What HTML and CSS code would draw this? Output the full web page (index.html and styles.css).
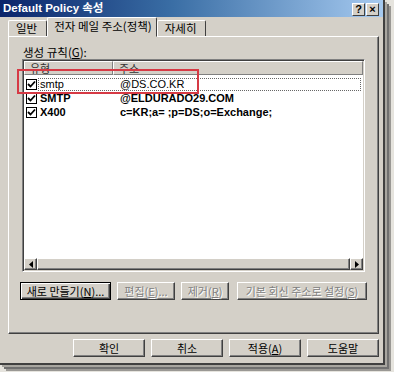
FILE: index.html
```html
<!DOCTYPE html>
<html>
<head>
<meta charset="utf-8">
<link rel="stylesheet" href="styles.css">
</head>
<body>
<div class="window">
  <div class="titlebar">
    <span class="title">Default Policy 속성</span>
    <div class="tbtns">
      <span class="tbtn">?</span>
      <span class="tbtn">×</span>
    </div>
  </div>
  <div class="body">
    <div class="tabs">
      <div class="tab">일반</div>
      <div class="tab active">전자 메일 주소(정책)</div>
      <div class="tab">자세히</div>
    </div>
    <div class="panel">
      <div class="label">생성 규칙(<u>G</u>):</div>
      <div class="list">
        <div class="header">
          <div class="col c1">유형</div>
          <div class="col c2">주소</div>
        </div>
        <div class="rows">
          <div class="row">
            <span class="cb"><svg width="9" height="9" viewBox="0 0 9 9"><path d="M1 4 L3.5 6.5 L8 1.5" fill="none" stroke="#000" stroke-width="1.8"/></svg></span>
            <span class="cell focus"><span class="t1">smtp</span><span class="t2">@DS.CO.KR</span></span>
          </div>
          <div class="row bold">
            <span class="cb"><svg width="9" height="9" viewBox="0 0 9 9"><path d="M1 4 L3.5 6.5 L8 1.5" fill="none" stroke="#000" stroke-width="1.8"/></svg></span>
            <span class="cell"><span class="t1">SMTP</span><span class="t2">@ELDURADO29.COM</span></span>
          </div>
          <div class="row bold">
            <span class="cb"><svg width="9" height="9" viewBox="0 0 9 9"><path d="M1 4 L3.5 6.5 L8 1.5" fill="none" stroke="#000" stroke-width="1.8"/></svg></span>
            <span class="cell"><span class="t1">X400</span><span class="t2">c=KR;a= ;p=DS;o=Exchange;</span></span>
          </div>
        </div>
        <div class="hscroll">
          <div class="sbtn"><svg width="4" height="7" viewBox="0 0 4 7"><path d="M4 0 L0 3.5 L4 7 Z" fill="#000"/></svg></div>
          <div class="thumb"></div>
          <div class="sbtn"><svg width="4" height="7" viewBox="0 0 4 7"><path d="M0 0 L4 3.5 L0 7 Z" fill="#000"/></svg></div>
        </div>
      </div>
      <div class="btnrow">
        <div class="btn default w-new">새로 만들기(<u>N</u>)...</div>
        <div class="btn disabled w-edit">편집(<u>E</u>)...</div>
        <div class="btn disabled w-del">제거(<u>R</u>)</div>
        <div class="btn disabled w-set">기본 회신 주소로 설정(<u>S</u>)</div>
      </div>
    </div>
    <div class="footer">
      <div class="btn fbtn">확인</div>
      <div class="btn fbtn">취소</div>
      <div class="btn fbtn">적용(<u>A</u>)</div>
      <div class="btn fbtn">도움말</div>
    </div>
  </div>
</div>
<div class="highlight"></div>
</body>
</html>
```

FILE: styles.css
```css
html, body {
  margin: 0;
  padding: 0;
}
body {
  width: 394px;
  height: 372px;
  background: #e6e4de;
  position: relative;
  overflow: hidden;
  font-family: "Noto Sans CJK KR", "Liberation Sans", sans-serif;
  font-size: 11px;
  color: #000;
}
.window {
  width: 383px;
  height: 363px;
  background: #d4d0c8;
  border-right: 2px solid #404040;
  border-bottom: 2px solid #404040;
  box-shadow: 2px 2px 0 #a8a6a0, 4px 4px 0 #707070, 6px 6px 0 #9a9894;
  display: flex;
  flex-direction: column;
}
.titlebar {
  height: 17px;
  background: linear-gradient(to right, #0a246a 0%, #3a6ea5 45%, #a6caf0 100%);
  display: flex;
  align-items: center;
  justify-content: space-between;
  padding: 0 4px 0 3px;
}
.title {
  color: #fff;
  font-family: "Liberation Sans", "Noto Sans CJK KR", sans-serif;
  font-weight: bold;
  font-size: 11.5px;
  line-height: 17px;
}
.tbtns {
  display: flex;
  gap: 1px;
  padding-top: 1px;
}
.tbtn {
  width: 11px;
  height: 11px;
  background: #d4d0c8;
  border-top: 1px solid #fff;
  border-left: 1px solid #fff;
  border-right: 1px solid #404040;
  border-bottom: 1px solid #404040;
  font-family: "Liberation Sans", sans-serif;
  font-weight: bold;
  font-size: 11px;
  line-height: 11px;
  text-align: center;
  color: #000;
}
.body {
  padding: 1px 0 0 8px;
  display: flex;
  flex-direction: column;
}
.tabs {
  display: flex;
  height: 18px;
  align-items: flex-end;
  position: relative;
  z-index: 2;
}
.tab {
  height: 16px;
  line-height: 15px;
  padding: 0 8px 0 7px;
  border-top: 1px solid #fff;
  border-left: 1px solid #fff;
  border-right: 1px solid #404040;
  border-radius: 2px 2px 0 0;
  font-size: 11.5px;
  box-sizing: border-box;
}
.tab:first-child {
  padding: 0 9px 0 7px;
}
.tab.active {
  height: 20px;
  margin-bottom: -1px;
  padding: 0 4px 0 6px;
  background: #d4d0c8;
  line-height: 17px;
  border-bottom: 1px solid #d4d0c8;
}
.panel {
  width: 371px;
  height: 298px;
  box-sizing: border-box;
  border-top: 1px solid #fff;
  border-left: 1px solid #fff;
  border-right: 1px solid #404040;
  border-bottom: 1px solid #404040;
  box-shadow: inset -1px -1px 0 #808080;
  padding: 9px 0 0 13px;
  display: flex;
  flex-direction: column;
}
.label {
  height: 13px;
  line-height: 12px;
  font-size: 11.5px;
  padding-left: 1px;
}
.list {
  width: 343px;
  height: 213px;
  box-sizing: border-box;
  background: #fff;
  border-top: 1px solid #808080;
  border-left: 1px solid #808080;
  border-right: 1px solid #fff;
  border-bottom: 1px solid #fff;
  box-shadow: inset 1px 1px 0 #404040, inset -1px -1px 0 #d4d0c8;
  padding: 1px;
  display: flex;
  flex-direction: column;
}
.header {
  height: 14px;
  display: flex;
  background: #d4d0c8;
  flex-shrink: 0;
}
.col {
  box-sizing: border-box;
  border-top: 1px solid #fff;
  border-left: 1px solid #fff;
  border-right: 1px solid #808080;
  border-bottom: 1px solid #808080;
  padding-left: 5px;
  font-size: 11px;
  line-height: 12px;
  color: #333;
}
.c1 { width: 89px; }
.c2 { flex: 1; }
.rows {
  flex: 1;
  padding-top: 2px;
  font-family: "Liberation Sans", sans-serif;
  font-size: 11px;
}
.row {
  height: 14px;
  display: flex;
  align-items: center;
  padding-left: 2px;
}
.row.bold { font-weight: bold; }
.cb {
  width: 9px;
  height: 9px;
  border: 1px solid #000;
  box-sizing: content-box;
  background: #fff;
  display: flex;
  align-items: center;
  justify-content: center;
  flex-shrink: 0;
}
.cell {
  flex: 1;
  height: 13px;
  display: flex;
  align-items: center;
  margin-left: 1px;
  margin-right: 2px;
  border: 1px dotted transparent;
  box-sizing: border-box;
}
.cell.focus {
  border: 1px dotted #666;
}
.t1 {
  width: 80px;
  padding-left: 1px;
}
.t2 {
  flex: 1;
}
.hscroll {
  height: 12px;
  display: flex;
  flex-shrink: 0;
  background: #d4d0c8;
}
.sbtn, .thumb {
  box-sizing: border-box;
  height: 12px;
  background: #d4d0c8;
  border-top: 1px solid #fff;
  border-left: 1px solid #fff;
  border-right: 1px solid #404040;
  border-bottom: 1px solid #404040;
  box-shadow: inset -1px -1px 0 #808080;
  display: flex;
  align-items: center;
  justify-content: center;
}
.sbtn { width: 13px; }
.thumb { flex: 1; }
.btnrow {
  margin-top: 10px;
  display: flex;
  gap: 6px;
  margin-left: -2px;
}
.btn {
  height: 18px;
  box-sizing: border-box;
  background: #d4d0c8;
  border-top: 1px solid #fff;
  border-left: 1px solid #fff;
  border-right: 1px solid #404040;
  border-bottom: 1px solid #404040;
  box-shadow: inset -1px -1px 0 #808080;
  font-size: 11px;
  line-height: 16px;
  text-align: center;
  white-space: nowrap;
}
.btn.default {
  border: 1px solid #000;
  box-shadow: inset 1px 1px 0 #fff, inset -1px -1px 0 #404040, inset -2px -2px 0 #808080;
}
.btn.disabled {
  color: #808080;
  text-shadow: 1px 1px 0 #fff;
}
.w-new { width: 91px; }
.w-edit { width: 58px; }
.w-del { width: 48px; }
.w-set { width: 130px; margin-left: 2px; }
.footer {
  margin-top: 5px;
  display: flex;
  justify-content: flex-end;
  gap: 6px;
  width: 371px;
}
.fbtn { width: 72px; }
.highlight {
  position: absolute;
  left: 17px;
  top: 69px;
  width: 182px;
  height: 25px;
  box-sizing: border-box;
  border: 2px solid #d63a45;
}
u { text-decoration: underline; }
```
